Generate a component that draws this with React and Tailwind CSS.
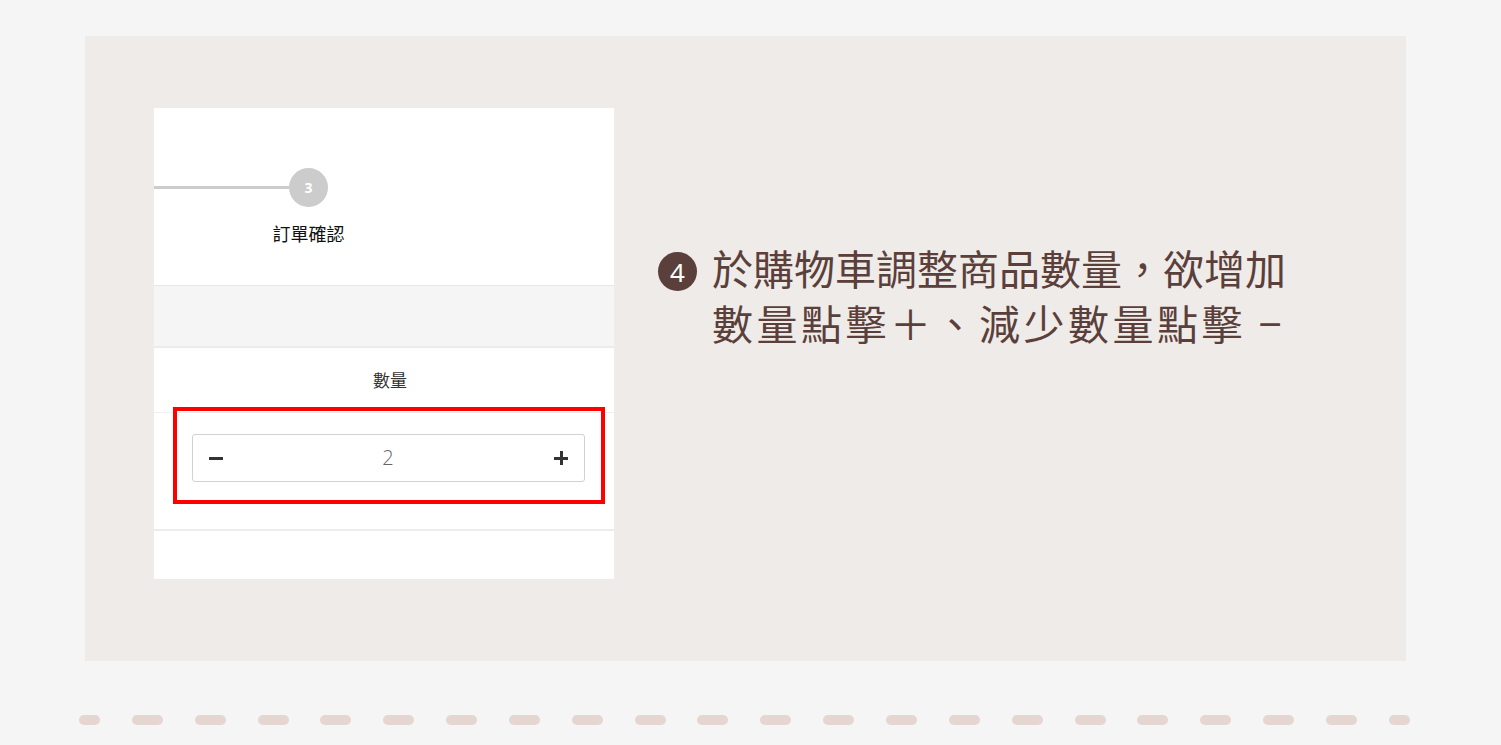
export default function App() {
  const cjk = { fontFamily: '"Noto Sans CJK TC", "Noto Sans", sans-serif' };
  return (
    <div className="min-h-[745px] w-[1501px] bg-[#f4f5f4] pt-[36px]" style={cjk}>
      <section className="ml-[85px] flex h-[625px] w-[1321px] bg-[#efebe8]">
        {/* cart screenshot */}
        <div className="ml-[69px] mt-[72px] flex h-[471px] w-[460px] flex-col bg-white">
          <div className="h-[178px] border-b border-[#e6e6e6] pt-[60px]">
            <div className="flex items-start">
              <div className="mt-[18px] h-[3px] w-[135px] bg-[#cccccc]" />
              <div className="flex w-[39px] flex-col items-center">
                <div className="flex h-[39px] w-[39px] items-center justify-center rounded-full bg-[#cccccc] text-[14px] font-bold text-white" style={{ fontFamily: '"Open Sans", sans-serif' }}>
                  3
                </div>
                <div className="mt-[15px] whitespace-nowrap text-[18px] leading-[22px] text-[#111]">訂單確認</div>
              </div>
            </div>
          </div>
          <div className="h-[62px] border-b-2 border-[#ececec] bg-[#f5f5f5]" />
          <div className="flex h-[65px] items-center justify-center border-b border-[#f0f0f0] pl-[12px] text-[17px] text-[#333]">數量</div>
          <div className="relative h-[118px] border-b-2 border-[#ececec]">
            <div className="ml-[38px] mt-[21px] flex h-[48px] w-[393px] rounded-[3px] border border-[#d2d2d2]">
              <button className="flex w-[45px] items-center justify-center">
                <span className="block h-[3px] w-[14px] bg-[#333]" />
              </button>
              <div className="flex flex-1 items-center justify-center text-[20px] font-light text-[#666]" style={{ fontFamily: '"Open Sans", sans-serif' }}>
                2
              </div>
              <button className="relative flex w-[46px] items-center justify-center">
                <span className="absolute h-[3px] w-[14px] bg-[#333]" />
                <span className="absolute h-[14px] w-[3px] bg-[#333]" />
              </button>
            </div>
            <div className="absolute left-[19px] top-[-6px] h-[97px] w-[432px] border-4 border-[#ff0000]" />
          </div>
          <div className="flex-1" />
        </div>

        {/* instruction */}
        <div className="ml-[44px] mt-[204px] flex items-start">
          <div className="mt-[12px] flex h-[39px] w-[39px] items-center justify-center rounded-full bg-[#5a3f3b] text-[26px] leading-none text-white" style={{ fontFamily: '"Noto Sans", sans-serif' }}>
            4
          </div>
          <div className="ml-[15px] text-[41px] leading-[55px] text-[#5a3f3b]">
            <p>於購物車調整商品數量，欲增加</p>
            <p className="tracking-[3.5px]">數量點擊＋、減少數量點擊 −</p>
          </div>
        </div>
      </section>

      <div className="ml-[79px] mt-[54px] flex w-[1331px] justify-between">
        <span className="h-[10px] w-[21px] rounded-full bg-[#e5d6d1]" />
        {Array.from({ length: 20 }).map((_, i) => (
          <span key={i} className="h-[10px] w-[31px] rounded-full bg-[#e5d6d1]" />
        ))}
        <span className="h-[10px] w-[21px] rounded-full bg-[#e5d6d1]" />
      </div>
    </div>
  );
}
